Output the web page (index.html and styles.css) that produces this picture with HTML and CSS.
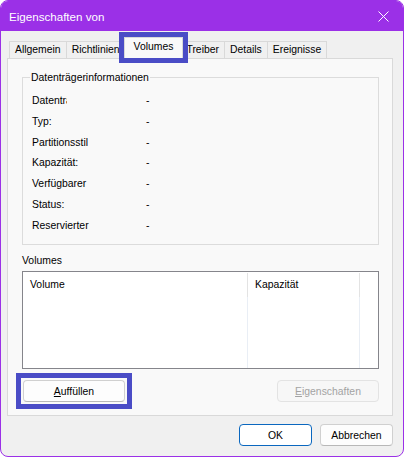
FILE: index.html
```html
<!DOCTYPE html>
<html lang="de">
<head>
    <meta charset="UTF-8">
    <title>Eigenschaften von</title>
    <link rel="stylesheet" href="styles.css">
</head>
<body>
    <div class="window">
        <div class="titlebar">
            <span class="title">Eigenschaften von</span>
            <svg class="close" width="11" height="11" viewBox="0 0 11 11">
                <path d="M0.5 0.5 L10.5 10.5 M10.5 0.5 L0.5 10.5" stroke="#fff" stroke-width="1" fill="none"/>
            </svg>
        </div>

        <div class="tabs">
            <div class="tab">Allgemein</div>
            <div class="tab">Richtlinien</div>
            <div class="tab active">Volumes</div>
            <div class="tab">Treiber</div>
            <div class="tab">Details</div>
            <div class="tab">Ereignisse</div>
        </div>

        <div class="page">
            <fieldset class="group">
                <legend>Datenträgerinformationen</legend>
                <div class="row"><span class="label clip">Datenträger:</span><span class="value">-</span></div>
                <div class="row"><span class="label">Typ:</span><span class="value">-</span></div>
                <div class="row"><span class="label">Partitionsstil</span><span class="value">-</span></div>
                <div class="row"><span class="label">Kapazität:</span><span class="value">-</span></div>
                <div class="row"><span class="label">Verfügbarer</span><span class="value">-</span></div>
                <div class="row"><span class="label">Status:</span><span class="value">-</span></div>
                <div class="row"><span class="label">Reservierter</span><span class="value">-</span></div>
            </fieldset>

            <div class="list-caption">Volumes</div>
            <div class="listview">
                <div class="col col-volume"><div class="col-head">Volume</div></div>
                <div class="col col-size"><div class="col-head">Kapazität</div></div>
                <div class="col col-rest"><div class="col-head"></div></div>
            </div>

            <div class="page-buttons">
                <div class="marker">
                    <button class="btn"><u>A</u>uffüllen</button>
                </div>
                <button class="btn" disabled><u>E</u>igenschaften</button>
            </div>
        </div>

        <div class="footer">
            <button class="btn default">OK</button>
            <button class="btn">Abbrechen</button>
        </div>
    </div>
</body>
</html>
```

FILE: styles.css
```css
:root {
    --accent: #9b30e7;
    --marker: #4a4cc6;
    --face: #f0f0f0;
    --page: #f9f9f9;
    --line: #d9d9d9;
    --text: #000;
}

* {
    box-sizing: border-box;
}

body {
    margin: 0;
    background: #fff;
    font-family: "Liberation Sans", Arial, sans-serif;
    font-size: 10.4px;
    color: var(--text);
}

.window {
    width: 404px;
    height: 457px;
    border: 1px solid var(--accent);
    border-radius: 8px;
    background: var(--face);
    overflow: hidden;
}

/* title bar */
.titlebar {
    height: 30px;
    background: var(--accent);
    color: #fff;
    display: flex;
    align-items: center;
    padding: 0 14px 0 8px;
}

.title {
    flex: 1;
    font-size: 11.6px;
}

.close {
    display: block;
}

/* tab strip */
.tabs {
    display: flex;
    align-items: flex-end;
    height: 27px;
    padding-left: 8px;
}

.tab {
    height: 17px;
    padding: 0 5px;
    line-height: 16px;
    border: 1px solid var(--line);
    border-bottom: none;
    margin-right: -1px;
    background: var(--face);
}

/* selected tab sits on top of its neighbours */
.tab.active {
    position: relative;
    z-index: 1;
    height: 21px;
    padding: 0 9px;
    margin: 0 -3px 0 -1px;
    line-height: 17px;
    background: var(--page);
    outline: 5px solid var(--marker);
}

/* tab page */
.page {
    margin: 0 10px 0 6px;
    height: 358px;
    background: var(--page);
    border: 1px solid var(--line);
    padding: 0 13px 0 14px;
}

.group {
    margin: 13px 0 0;
    height: 173px;
    border: 1px solid #dcdcdc;
    padding: 8px 0 0 9px;
}

.group legend {
    padding: 0 1px;
    margin-left: -2px;
}

.row {
    display: flex;
    height: 20.8px;
    line-height: 20.8px;
}

.label {
    width: 114px;
    white-space: nowrap;
}

.label.clip {
    width: 35px;
    overflow: hidden;
    margin-right: 79px;
}

.list-caption {
    margin-top: 10px;
    height: 16px;
}

.listview {
    display: flex;
    height: 98px;
    border: 1px solid #85858b;
    background: #fff;
    padding-top: 1px;
}

.col {
    border-right: 1px solid #e9eef5;
}

.col-volume { width: 225px; }
.col-size { width: 112px; }
.col-rest { flex: 1; border-right: none; }

.col-head {
    height: 24px;
    line-height: 24px;
    padding-left: 7px;
    margin-right: -1px;
    border-right: 1px solid #e3e3e3;
}

.col-rest .col-head { border-right: none; }

.page-buttons {
    display: flex;
    justify-content: space-between;
    align-items: flex-start;
    margin-top: 11px;
    padding-left: 1px;
}

.marker {
    display: flex;
    margin: -7px;
    padding: 2px;
    border: 5px solid var(--marker);
}

/* push buttons */
.btn {
    width: 102px;
    height: 22px;
    padding: 0;
    font: inherit;
    color: var(--text);
    background: #fdfdfd;
    border: 1px solid #d0d0d0;
    border-bottom-color: #b8b8b8;
    border-radius: 4px;
}

.btn:disabled {
    color: #a3a3a3;
    background: #f7f7f7;
    border-color: #e3e3e3;
}

.footer {
    display: flex;
    justify-content: flex-end;
    gap: 8px;
    padding: 8px 10px 0 0;
}

.footer .btn {
    width: 73px;
}

.btn.default {
    border-color: #0a67bf;
    background: #fff;
}
```
